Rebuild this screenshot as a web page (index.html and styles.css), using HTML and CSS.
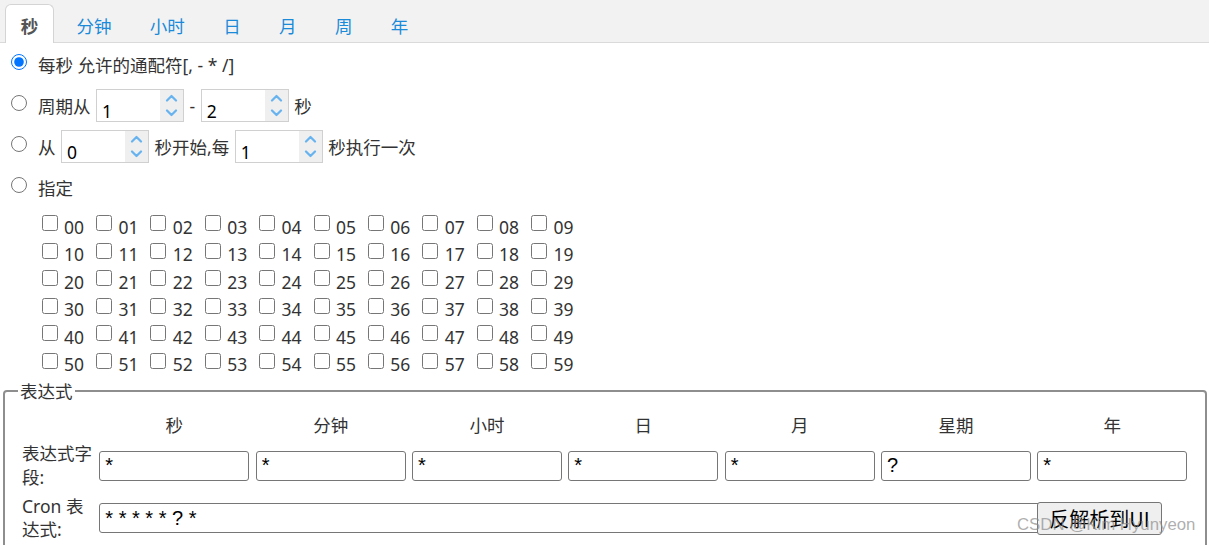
FILE: index.html
```html
<!DOCTYPE html>
<html lang="zh-CN">
<head>
<meta charset="utf-8">
<title>Cron 表达式</title>
<link rel="stylesheet" href="styles.css">
</head>
<body>
<div class="tabs">
  <div class="tab active">秒</div>
  <div class="tab">分钟</div>
  <div class="tab">小时</div>
  <div class="tab">日</div>
  <div class="tab">月</div>
  <div class="tab">周</div>
  <div class="tab">年</div>
</div>

<div class="panel">
  <div class="opt">
    <input class="radio" type="radio" name="sec" checked>
    <span>每秒 允许的通配符[, - * /]</span>
  </div>
  <div class="opt">
    <input class="radio" type="radio" name="sec">
    <span>周期从</span>
    <span class="num"><input class="num-in" value="1"><span class="spin"><svg viewBox="0 0 12 8" class="chev"><path d="M1.5 6.5 L6 2 L10.5 6.5"/></svg><svg viewBox="0 0 12 8" class="chev"><path d="M1.5 1.5 L6 6 L10.5 1.5"/></svg></span></span>
    <span>-</span>
    <span class="num"><input class="num-in" value="2"><span class="spin"><svg viewBox="0 0 12 8" class="chev"><path d="M1.5 6.5 L6 2 L10.5 6.5"/></svg><svg viewBox="0 0 12 8" class="chev"><path d="M1.5 1.5 L6 6 L10.5 1.5"/></svg></span></span>
    <span>秒</span>
  </div>
  <div class="opt">
    <input class="radio" type="radio" name="sec">
    <span>从</span>
    <span class="num"><input class="num-in" value="0"><span class="spin"><svg viewBox="0 0 12 8" class="chev"><path d="M1.5 6.5 L6 2 L10.5 6.5"/></svg><svg viewBox="0 0 12 8" class="chev"><path d="M1.5 1.5 L6 6 L10.5 1.5"/></svg></span></span>
    <span>秒开始,每</span>
    <span class="num"><input class="num-in" value="1"><span class="spin"><svg viewBox="0 0 12 8" class="chev"><path d="M1.5 6.5 L6 2 L10.5 6.5"/></svg><svg viewBox="0 0 12 8" class="chev"><path d="M1.5 1.5 L6 6 L10.5 1.5"/></svg></span></span>
    <span>秒执行一次</span>
  </div>
  <div class="opt">
    <input class="radio" type="radio" name="sec">
    <span>指定</span>
  </div>

  <div class="checks">
    <label class="ck"><input type="checkbox"><span>00</span></label>
    <label class="ck"><input type="checkbox"><span>01</span></label>
    <label class="ck"><input type="checkbox"><span>02</span></label>
    <label class="ck"><input type="checkbox"><span>03</span></label>
    <label class="ck"><input type="checkbox"><span>04</span></label>
    <label class="ck"><input type="checkbox"><span>05</span></label>
    <label class="ck"><input type="checkbox"><span>06</span></label>
    <label class="ck"><input type="checkbox"><span>07</span></label>
    <label class="ck"><input type="checkbox"><span>08</span></label>
    <label class="ck"><input type="checkbox"><span>09</span></label>
    <label class="ck"><input type="checkbox"><span>10</span></label>
    <label class="ck"><input type="checkbox"><span>11</span></label>
    <label class="ck"><input type="checkbox"><span>12</span></label>
    <label class="ck"><input type="checkbox"><span>13</span></label>
    <label class="ck"><input type="checkbox"><span>14</span></label>
    <label class="ck"><input type="checkbox"><span>15</span></label>
    <label class="ck"><input type="checkbox"><span>16</span></label>
    <label class="ck"><input type="checkbox"><span>17</span></label>
    <label class="ck"><input type="checkbox"><span>18</span></label>
    <label class="ck"><input type="checkbox"><span>19</span></label>
    <label class="ck"><input type="checkbox"><span>20</span></label>
    <label class="ck"><input type="checkbox"><span>21</span></label>
    <label class="ck"><input type="checkbox"><span>22</span></label>
    <label class="ck"><input type="checkbox"><span>23</span></label>
    <label class="ck"><input type="checkbox"><span>24</span></label>
    <label class="ck"><input type="checkbox"><span>25</span></label>
    <label class="ck"><input type="checkbox"><span>26</span></label>
    <label class="ck"><input type="checkbox"><span>27</span></label>
    <label class="ck"><input type="checkbox"><span>28</span></label>
    <label class="ck"><input type="checkbox"><span>29</span></label>
    <label class="ck"><input type="checkbox"><span>30</span></label>
    <label class="ck"><input type="checkbox"><span>31</span></label>
    <label class="ck"><input type="checkbox"><span>32</span></label>
    <label class="ck"><input type="checkbox"><span>33</span></label>
    <label class="ck"><input type="checkbox"><span>34</span></label>
    <label class="ck"><input type="checkbox"><span>35</span></label>
    <label class="ck"><input type="checkbox"><span>36</span></label>
    <label class="ck"><input type="checkbox"><span>37</span></label>
    <label class="ck"><input type="checkbox"><span>38</span></label>
    <label class="ck"><input type="checkbox"><span>39</span></label>
    <label class="ck"><input type="checkbox"><span>40</span></label>
    <label class="ck"><input type="checkbox"><span>41</span></label>
    <label class="ck"><input type="checkbox"><span>42</span></label>
    <label class="ck"><input type="checkbox"><span>43</span></label>
    <label class="ck"><input type="checkbox"><span>44</span></label>
    <label class="ck"><input type="checkbox"><span>45</span></label>
    <label class="ck"><input type="checkbox"><span>46</span></label>
    <label class="ck"><input type="checkbox"><span>47</span></label>
    <label class="ck"><input type="checkbox"><span>48</span></label>
    <label class="ck"><input type="checkbox"><span>49</span></label>
    <label class="ck"><input type="checkbox"><span>50</span></label>
    <label class="ck"><input type="checkbox"><span>51</span></label>
    <label class="ck"><input type="checkbox"><span>52</span></label>
    <label class="ck"><input type="checkbox"><span>53</span></label>
    <label class="ck"><input type="checkbox"><span>54</span></label>
    <label class="ck"><input type="checkbox"><span>55</span></label>
    <label class="ck"><input type="checkbox"><span>56</span></label>
    <label class="ck"><input type="checkbox"><span>57</span></label>
    <label class="ck"><input type="checkbox"><span>58</span></label>
    <label class="ck"><input type="checkbox"><span>59</span></label>
  </div>
</div>

<fieldset class="expr">
  <legend class="legend">表达式</legend>
  <div class="grid">
    <div class="corner"></div>
    <div class="hd">秒</div>
    <div class="hd">分钟</div>
    <div class="hd">小时</div>
    <div class="hd">日</div>
    <div class="hd">月</div>
    <div class="hd">星期</div>
    <div class="hd">年</div>

    <div class="lbl">表达式字段:</div>
    <input class="field" value="*">
    <input class="field" value="*">
    <input class="field" value="*">
    <input class="field" value="*">
    <input class="field" value="*">
    <input class="field" value="?">
    <input class="field" value="*">

    <div class="lbl">Cron 表达式:</div>
    <input class="field cron" value="* * * * * ? *">
    <button class="btn" type="button">反解析到UI</button>
  </div>
</fieldset>

<div class="watermark">CSDN @Kim Hyunyeon</div>
</body>
</html>
```

FILE: styles.css
```css
html, body {
  margin: 0;
  padding: 0;
  background: #fff;
}
body {
  width: 1209px;
  height: 545px;
  overflow: hidden;
  position: relative;
  font-family: "Noto Sans", "Noto Sans CJK SC", sans-serif;
  font-size: 17.5px;
  color: #333;
}

/* tabs */
.tabs {
  box-sizing: border-box;
  height: 43px;
  padding: 4px 0 0 5px;
  display: flex;
  align-items: flex-end;
  gap: 6.4px;
  background: #f2f2f2;
  border-bottom: 1px solid #dadada;
}
.tab {
  box-sizing: border-box;
  height: 39px;
  margin-bottom: -1px;
  padding: 3px 15px 0;
  line-height: 35px;
  border: 1px solid transparent;
  border-bottom: 0;
  border-radius: 6px 6px 0 0;
  color: #1a8ad9;
  font-family: "Noto Sans CJK SC", sans-serif;
}
.tab.active {
  background: #fff;
  border-color: #d4d4d4;
  color: #555;
  font-weight: bold;
  padding: 3px 14.75px 0;
}

/* options */
.panel {
  padding-top: 1px;
}
.opt {
  height: 41px;
  display: flex;
  align-items: center;
  gap: 5.5px;
  line-height: 24px;
}
.radio {
  width: 16px;
  height: 16px;
  margin: 0 5.5px 5px 11px;
}
.num {
  box-sizing: border-box;
  width: 88px;
  height: 33px;
  display: flex;
  border: 1px solid #d0d0d0;
  background: #fff;
}
.num-in {
  box-sizing: border-box;
  flex: 1;
  min-width: 0;
  height: 100%;
  border: 0;
  padding: 10px 0 0 5px;
  margin: 0;
  outline: none;
  font-family: "Noto Sans", sans-serif;
  font-size: 17.5px;
  color: #000;
  background: transparent;
}
.spin {
  width: 23px;
  background: #efefef;
  display: flex;
  flex-direction: column;
  align-items: center;
  justify-content: center;
  gap: 7px;
}
.chev {
  width: 13px;
  height: 8px;
  fill: none;
  stroke: #66b3f0;
  stroke-width: 2.2;
  stroke-linecap: round;
  stroke-linejoin: round;
}

/* checkbox grid */
.checks {
  margin: 5.5px 0 0 41.7px;
  display: grid;
  grid-template-columns: repeat(10, 54.4px);
  grid-auto-rows: 27.5px;
}
.ck {
  display: flex;
  align-items: center;
  line-height: 27.5px;
}
.ck input {
  width: 16px;
  height: 16px;
  margin: 0 0 8px 0;
}
.ck span {
  margin-left: 6.3px;
}

/* expression fieldset */
.expr {
  margin: 0.5px 2px 0 3px;
  padding: 10px 12px 10px 13px;
  border: 2px solid #8e8e8e;
  border-radius: 4px;
  min-width: 0;
}
.legend {
  padding: 0 2px;
  line-height: 23.5px;
  font-family: "Noto Sans CJK SC", sans-serif;
}
.grid {
  display: grid;
  grid-template-columns: 75px repeat(7, 150px);
  column-gap: 6.33px;
  row-gap: 5.5px;
  grid-template-rows: 24px 47px 47px;
  line-height: 23.5px;
}
.hd {
  text-align: center;
  font-family: "Noto Sans CJK SC", sans-serif;
}
.lbl {
  padding-left: 4px;
}
.field {
  box-sizing: border-box;
  align-self: center;
  width: 150px;
  height: 30px;
  margin: 0;
  padding: 0 5px;
  border: 1px solid #767676;
  border-radius: 3px;
  font-family: "Liberation Sans", Arial, sans-serif;
  font-size: 20px;
  color: #000;
  background: #fff;
}
.cron {
  grid-column: 2 / 8;
  width: auto;
  margin-right: -10px;
}
.btn {
  align-self: center;
  justify-self: start;
  height: 33px;
  margin: 0;
  padding: 0 11px;
  border: 1px solid #767676;
  border-radius: 3px;
  background: #efefef;
  color: #000;
  font-family: "Noto Sans CJK SC", sans-serif;
  font-size: 20px;
  line-height: 31px;
}

.watermark {
  position: absolute;
  left: 1017px;
  top: 515px;
  font-family: "Liberation Sans", Arial, sans-serif;
  font-size: 16.8px;
  color: rgba(140, 140, 140, 0.7);
  pointer-events: none;
}
```
